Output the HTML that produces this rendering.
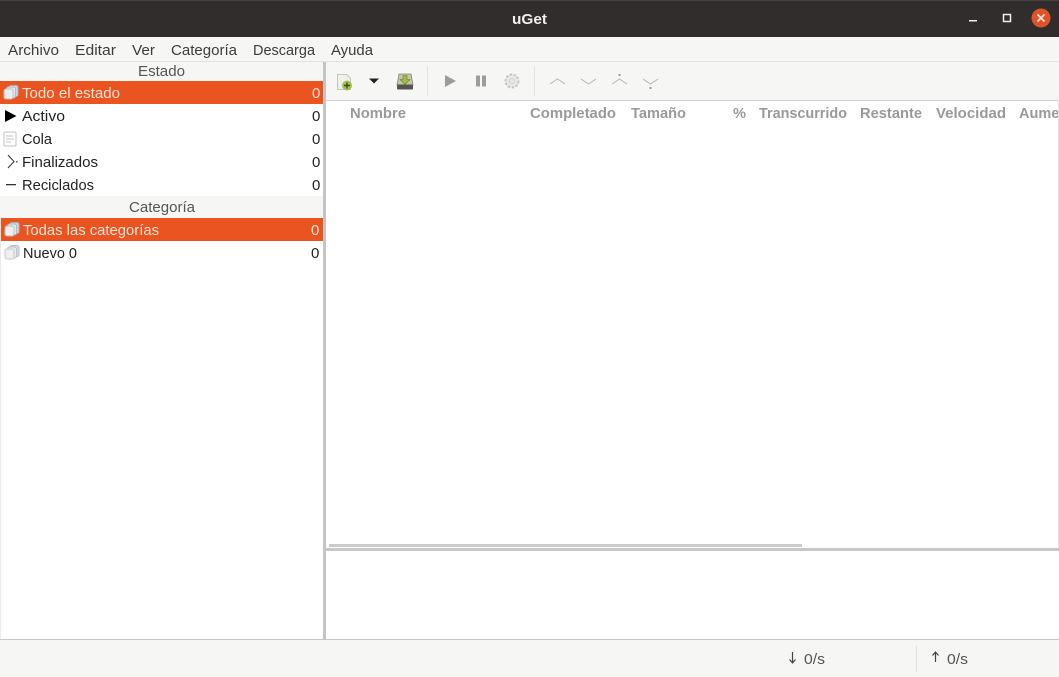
<!DOCTYPE html>
<html lang="es"><head><meta charset="utf-8"><title>uGet</title>
<style>
html,body{margin:0;padding:0;width:1059px;height:677px;overflow:hidden;background:#f6f6f5}
svg{display:block}
text{font-family:"Liberation Sans",sans-serif;font-size:15px;fill:#222}
.m{fill:#3c3c3c}
.w{fill:#fbe3d8}
.h{font-weight:bold;font-size:14.5px;fill:#9a9a9a}
.d{fill:#555}
</style></head><body>
<svg width="1059" height="677" viewBox="0 0 1059 677" xmlns="http://www.w3.org/2000/svg">
<defs>
<g id="docs"><rect x="6" y="0.500" width="9" height="11" rx="2" fill="#cfd8e4" stroke="#aab2bc"/><rect x="3.500" y="2" width="9" height="11" rx="2" fill="#e4e8ee" stroke="#b5b8bc"/><rect x="1" y="4" width="9" height="10" rx="2" fill="#eeeeee" stroke="#c0c0c0"/></g>
</defs>
<!-- title bar -->
<rect width="1059" height="37" fill="#302d2c"/>
<rect width="1059" height="1" fill="#45413f"/>
<text x="529.5" y="24" text-anchor="middle" textLength="35" lengthAdjust="spacingAndGlyphs" style="font-weight:bold;fill:#f0efed;font-size:15px">uGet</text>
<rect x="969" y="20" width="8" height="1.500" fill="#eee"/>
<rect x="1003.500" y="14.500" width="7" height="7" fill="none" stroke="#eee" stroke-width="1.500"/>
<circle cx="1041" cy="18" r="9.500" fill="#e0532a"/>
<path d="M1037.500 14.500l7 7M1044.500 14.500l-7 7" stroke="#fbe9e2" stroke-width="1.600" fill="none"/>
<!-- menu -->
<rect y="37" width="1059" height="24" fill="#f6f6f5"/>
<rect y="61" width="1059" height="1" fill="#e2e1df"/>
<text class="m" x="8" y="55" textLength="51" lengthAdjust="spacingAndGlyphs">Archivo</text>
<text class="m" x="75" y="55" textLength="41" lengthAdjust="spacingAndGlyphs">Editar</text>
<text class="m" x="132" y="55" textLength="23" lengthAdjust="spacingAndGlyphs">Ver</text>
<text class="m" x="171" y="55" textLength="66" lengthAdjust="spacingAndGlyphs">Categoría</text>
<text class="m" x="253" y="55" textLength="62" lengthAdjust="spacingAndGlyphs">Descarga</text>
<text class="m" x="331" y="55" textLength="42" lengthAdjust="spacingAndGlyphs">Ayuda</text>
<!-- left pane -->
<rect y="62" width="324" height="578" fill="#fff"/>
<rect y="62" width="324" height="19" fill="#f6f6f5"/>
<text class="d" x="138" y="76" textLength="47" lengthAdjust="spacingAndGlyphs">Estado</text>
<rect y="81" width="324" height="23" fill="#e95420"/>
<use href="#docs" x="3" y="85"/>
<text class="w" x="22" y="98" textLength="98" lengthAdjust="spacingAndGlyphs">Todo el estado</text>
<text class="w" x="312" y="98">0</text>
<path d="M5 110l11.500 6-11.500 6z" fill="#000"/>
<text x="22" y="121" textLength="43" lengthAdjust="spacingAndGlyphs">Activo</text>
<text x="312" y="121">0</text>
<rect x="4" y="132" width="12" height="14" rx="1" fill="#fff" stroke="#c0c0c0"/>
<path d="M6 136h7M6 139h8M6 142h5" stroke="#c0c0c0"/>
<text x="22" y="144" textLength="30" lengthAdjust="spacingAndGlyphs">Cola</text>
<text x="312" y="144">0</text>
<path d="M8 155l6 6.500-6 6.500" fill="none" stroke="#333" stroke-width="1"/><rect x="16" y="161" width="1.500" height="1.500" fill="#555"/>
<text x="22" y="167" textLength="76" lengthAdjust="spacingAndGlyphs">Finalizados</text>
<text x="312" y="167">0</text>
<rect x="6" y="184" width="10" height="1.300" fill="#333"/>
<text x="22" y="190" textLength="72" lengthAdjust="spacingAndGlyphs">Reciclados</text>
<text x="312" y="190">0</text>
<rect y="196" width="324" height="22" fill="#f6f6f5"/>
<text class="d" x="129" y="212" textLength="66" lengthAdjust="spacingAndGlyphs">Categoría</text>
<rect x="1" y="218" width="322" height="23" fill="#e95420"/>
<use href="#docs" x="4" y="222"/>
<text class="w" x="23" y="235" textLength="136" lengthAdjust="spacingAndGlyphs">Todas las categorías</text>
<text class="w" x="311" y="235">0</text>
<use href="#docs" x="4" y="245" opacity=".85"/>
<text x="23" y="258" textLength="54" lengthAdjust="spacingAndGlyphs">Nuevo 0</text>
<text x="311" y="258">0</text>
<rect y="218" width="1" height="422" fill="#ececec"/>
<!-- divider -->
<rect x="323" y="62" width="3" height="578" fill="#c4c4c4"/>
<!-- toolbar -->
<rect x="326" y="62" width="733" height="38" fill="#f6f6f5"/>
<path d="M337.500 74.500h9l4 4v11h-13z" fill="#f2f0ea" stroke="#c4c4be"/>
<circle cx="347" cy="85.500" r="5" fill="#a5bf4e"/>
<path d="M347 82.500v6M344 85.500h6" stroke="#36511a" stroke-width="1.400"/>
<path d="M369 78.500h10l-5 5z" fill="#222"/>
<path d="M399 74h12l2 11h-16z" fill="#c9c6a8" stroke="#85836e" stroke-width=".8"/>
<path d="M403 75.500h4v4h3l-5 5-5-5h3z" fill="#9cbf4a" stroke="#5c7a2a" stroke-width=".6"/>
<rect x="397" y="84.500" width="16" height="5" rx="1" fill="#55544e"/>
<rect x="427" y="66" width="1" height="30" fill="#e3e3e1"/>
<path d="M445 75l11 6-11 6z" fill="#9c9c9c"/>
<rect x="476" y="75.500" width="4" height="11" fill="#9c9c9c"/><rect x="482" y="75.500" width="4" height="11" fill="#9c9c9c"/>
<circle cx="512" cy="81" r="6.500" fill="#e9e9e7" stroke="#c4c4c4" stroke-width="2" stroke-dasharray="2.500 1.500"/>
<circle cx="512" cy="81" r="2.500" fill="none" stroke="#cfcfcf"/>
<rect x="534" y="66" width="1" height="30" fill="#e3e3e1"/>
<g fill="none" stroke="#b4b4b4" stroke-width="1">
<path d="M550 84l7.500-5 7.500 5"/><path d="M581 79l7.500 5 7.500-5"/><path d="M612 84l7.500-5 7.500 5"/><path d="M643 79l7.500 5 7.500-5"/>
</g>
<rect x="618.500" y="74" width="2" height="2" fill="#999"/><rect x="649.500" y="87" width="2" height="2" fill="#999"/>
<rect x="326" y="100" width="733" height="1" fill="#cfcfcf"/>
<!-- list -->
<rect x="326" y="101" width="733" height="447" fill="#fff"/>
<text class="h" x="350" y="118" textLength="56" lengthAdjust="spacingAndGlyphs">Nombre</text>
<text class="h" x="530" y="118" textLength="86" lengthAdjust="spacingAndGlyphs">Completado</text>
<text class="h" x="631" y="118" textLength="55" lengthAdjust="spacingAndGlyphs">Tamaño</text>
<text class="h" x="733" y="118" textLength="13" lengthAdjust="spacingAndGlyphs">%</text>
<text class="h" x="759" y="118" textLength="88" lengthAdjust="spacingAndGlyphs">Transcurrido</text>
<text class="h" x="860" y="118" textLength="62" lengthAdjust="spacingAndGlyphs">Restante</text>
<text class="h" x="936" y="118" textLength="70" lengthAdjust="spacingAndGlyphs">Velocidad</text>
<text class="h" x="1019" y="118">Aumento</text>
<rect x="1058" y="100" width="1" height="450" fill="#e2e2e2"/>
<rect x="329" y="544" width="473" height="3" fill="#cbcbcb"/>
<rect x="326" y="548" width="733" height="3" fill="#c8c8c8"/>
<rect x="326" y="551" width="733" height="88" fill="#fff"/>
<!-- status bar -->
<rect y="639" width="1059" height="1" fill="#c9c9c9"/>
<rect y="640" width="1059" height="37" fill="#f6f6f5"/>
<path d="M792.500 652v10M789.500 659.500l3 3.500 3-3.500" fill="none" stroke="#444" stroke-width="1.200"/>
<text class="d" x="804" y="664" textLength="21" lengthAdjust="spacingAndGlyphs">0/s</text>
<rect x="916" y="646" width="1" height="26" fill="#e0e0de"/>
<path d="M935.500 662v-10M932.500 655.500l3-3.500 3 3.500" fill="none" stroke="#444" stroke-width="1.200"/>
<text class="d" x="947" y="664" textLength="21" lengthAdjust="spacingAndGlyphs">0/s</text>
</svg>
</body></html>
